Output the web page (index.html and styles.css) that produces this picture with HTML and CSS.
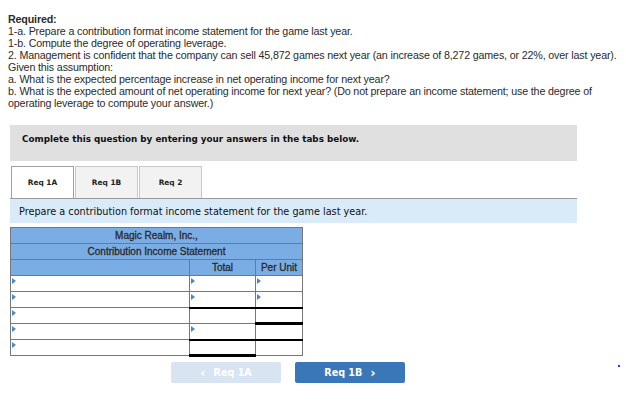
FILE: index.html
```html
<!DOCTYPE html>
<html>
<head>
<meta charset="utf-8">
<link rel="stylesheet" href="styles.css">
</head>
<body>
<div class="required">
  <div class="req-title">Required:</div>
  <div>1-a. Prepare a contribution format income statement for the game last year.</div>
  <div>1-b. Compute the degree of operating leverage.</div>
  <div>2. Management is confident that the company can sell 45,872 games next year (an increase of 8,272 games, or 22%, over last year).</div>
  <div>Given this assumption:</div>
  <div>a. What is the expected percentage increase in net operating income for next year?</div>
  <div>b. What is the expected amount of net operating income for next year? (Do not prepare an income statement; use the degree of operating leverage to compute your answer.)</div>
</div>

<div class="main">
  <div class="instructions">Complete this question by entering your answers in the tabs below.</div>
  <div class="tabs">
    <div class="tab active">Req 1A</div>
    <div class="tab">Req 1B</div>
    <div class="tab">Req 2</div>
  </div>
  <div class="prompt">Prepare a contribution format income statement for the game last year.</div>

  <table class="stmt">
    <tr><th colspan="3" class="title">Magic Realm, Inc.,</th></tr>
    <tr><th colspan="3" class="title">Contribution Income Statement</th></tr>
    <tr><th class="c1"></th><th class="c2">Total</th><th class="c3">Per Unit</th></tr>
    <tr><td><span class="mk"></span></td><td><span class="mk"></span></td><td><span class="mk"></span></td></tr>
    <tr><td><span class="mk"></span></td><td class="bb"><span class="mk"></span></td><td class="bb"><span class="mk"></span></td></tr>
    <tr><td><span class="mk"></span></td><td></td><td class="bbt"></td></tr>
    <tr><td><span class="mk"></span></td><td class="bb"><span class="mk"></span></td><td class="bb"></td></tr>
    <tr><td><span class="mk"></span></td><td class="bbt"></td><td></td></tr>
  </table>

  <div class="nav">
    <div class="btn prev"><span class="chev">&lsaquo;</span> Req 1A</div>
    <div class="btn next">Req 1B <span class="chev">&rsaquo;</span></div>
  </div>
</div>
<span class="dot"></span>
</body>
</html>
```

FILE: styles.css
```css
html, body {
  margin: 0;
  padding: 0;
  background: #fff;
}
body {
  position: relative;
  width: 626px;
  height: 401px;
  overflow: hidden;
}
.required {
  padding: 13px 0 0 8px;
  font-family: "Liberation Sans", Arial, sans-serif;
  font-size: 10.7px;
  line-height: 12px;
  color: #2b2b2b;
  letter-spacing: -0.15px;
}
.req-title {
  font-weight: bold;
}
.main {
  margin: 16px 49px 0 10px;
}
.instructions {
  background: #e0e0e0;
  height: 36px;
  box-sizing: border-box;
  padding: 9px 0 0 12px;
  font-family: "DejaVu Sans", Verdana, sans-serif;
  font-weight: bold;
  font-size: 8.8px;
  line-height: 11px;
  color: #111;
}
.tabs {
  display: flex;
  margin-top: 5px;
  padding-left: 1px;
  gap: 1px;
}
.tab {
  width: 61px;
  height: 31px;
  border: 1px solid #c8c8c8;
  border-bottom: none;
  background: #f2f2f2;
  display: flex;
  align-items: center;
  justify-content: center;
  font-family: "DejaVu Sans", Verdana, sans-serif;
  font-size: 7.4px;
  font-weight: bold;
  color: #222;
}
.tab.active {
  background: #fff;
  border-color: #a0a0a0;
}
.prompt {
  background: #d9ebf9;
  border-top: 1px solid #999;
  height: 24px;
  display: flex;
  align-items: center;
  padding-left: 9px;
  font-family: "DejaVu Sans", Verdana, sans-serif;
  font-size: 9.7px;
  color: #111;
}
.stmt {
  border-collapse: collapse;
  margin-top: 4px;
  width: 293px;
  font-family: "Liberation Sans", Arial, sans-serif;
  font-size: 10px;
  color: #2a2a2a;
}
.stmt th, .stmt td {
  border: 1px solid #777;
  height: 16px;
  box-sizing: border-box;
  padding: 0;
  line-height: 14px;
  position: relative;
}
.stmt th {
  background: #7aade4;
  font-weight: normal;
  -webkit-text-stroke: 0.3px #2a2a2a;
  text-align: center;
}
.c1 { width: 179px; }
.c2 { width: 66px; }
.c3 { width: 47px; }
.stmt td {
  background: #fff;
  vertical-align: top;
}
.stmt td.bb {
  border-bottom: 2px solid #000;
}
.stmt td.bbt {
  border-bottom: 3px solid #000;
}
.mk {
  position: absolute;
  left: 1px;
  top: 2px;
  width: 0;
  height: 0;
  border-top: 3px solid transparent;
  border-bottom: 3px solid transparent;
  border-left: 4px solid #4d86c8;
}
.nav {
  display: flex;
  gap: 14px;
  margin-top: 5px;
  padding-left: 161px;
}
.btn {
  width: 110px;
  height: 21px;
  border-radius: 2px;
  display: flex;
  align-items: center;
  justify-content: center;
  font-family: "DejaVu Sans", Verdana, sans-serif;
  font-size: 9.6px;
  font-weight: bold;
  color: #fff;
  gap: 8px;
}
.btn .chev {
  font-size: 13px;
  line-height: 1;
}
.prev {
  background: #d9e4f2;
}
.next {
  background: #3a77b9;
}
.dot {
  position: absolute;
  left: 618px;
  top: 365px;
  width: 2px;
  height: 2px;
  background: #1a3cff;
}
```
